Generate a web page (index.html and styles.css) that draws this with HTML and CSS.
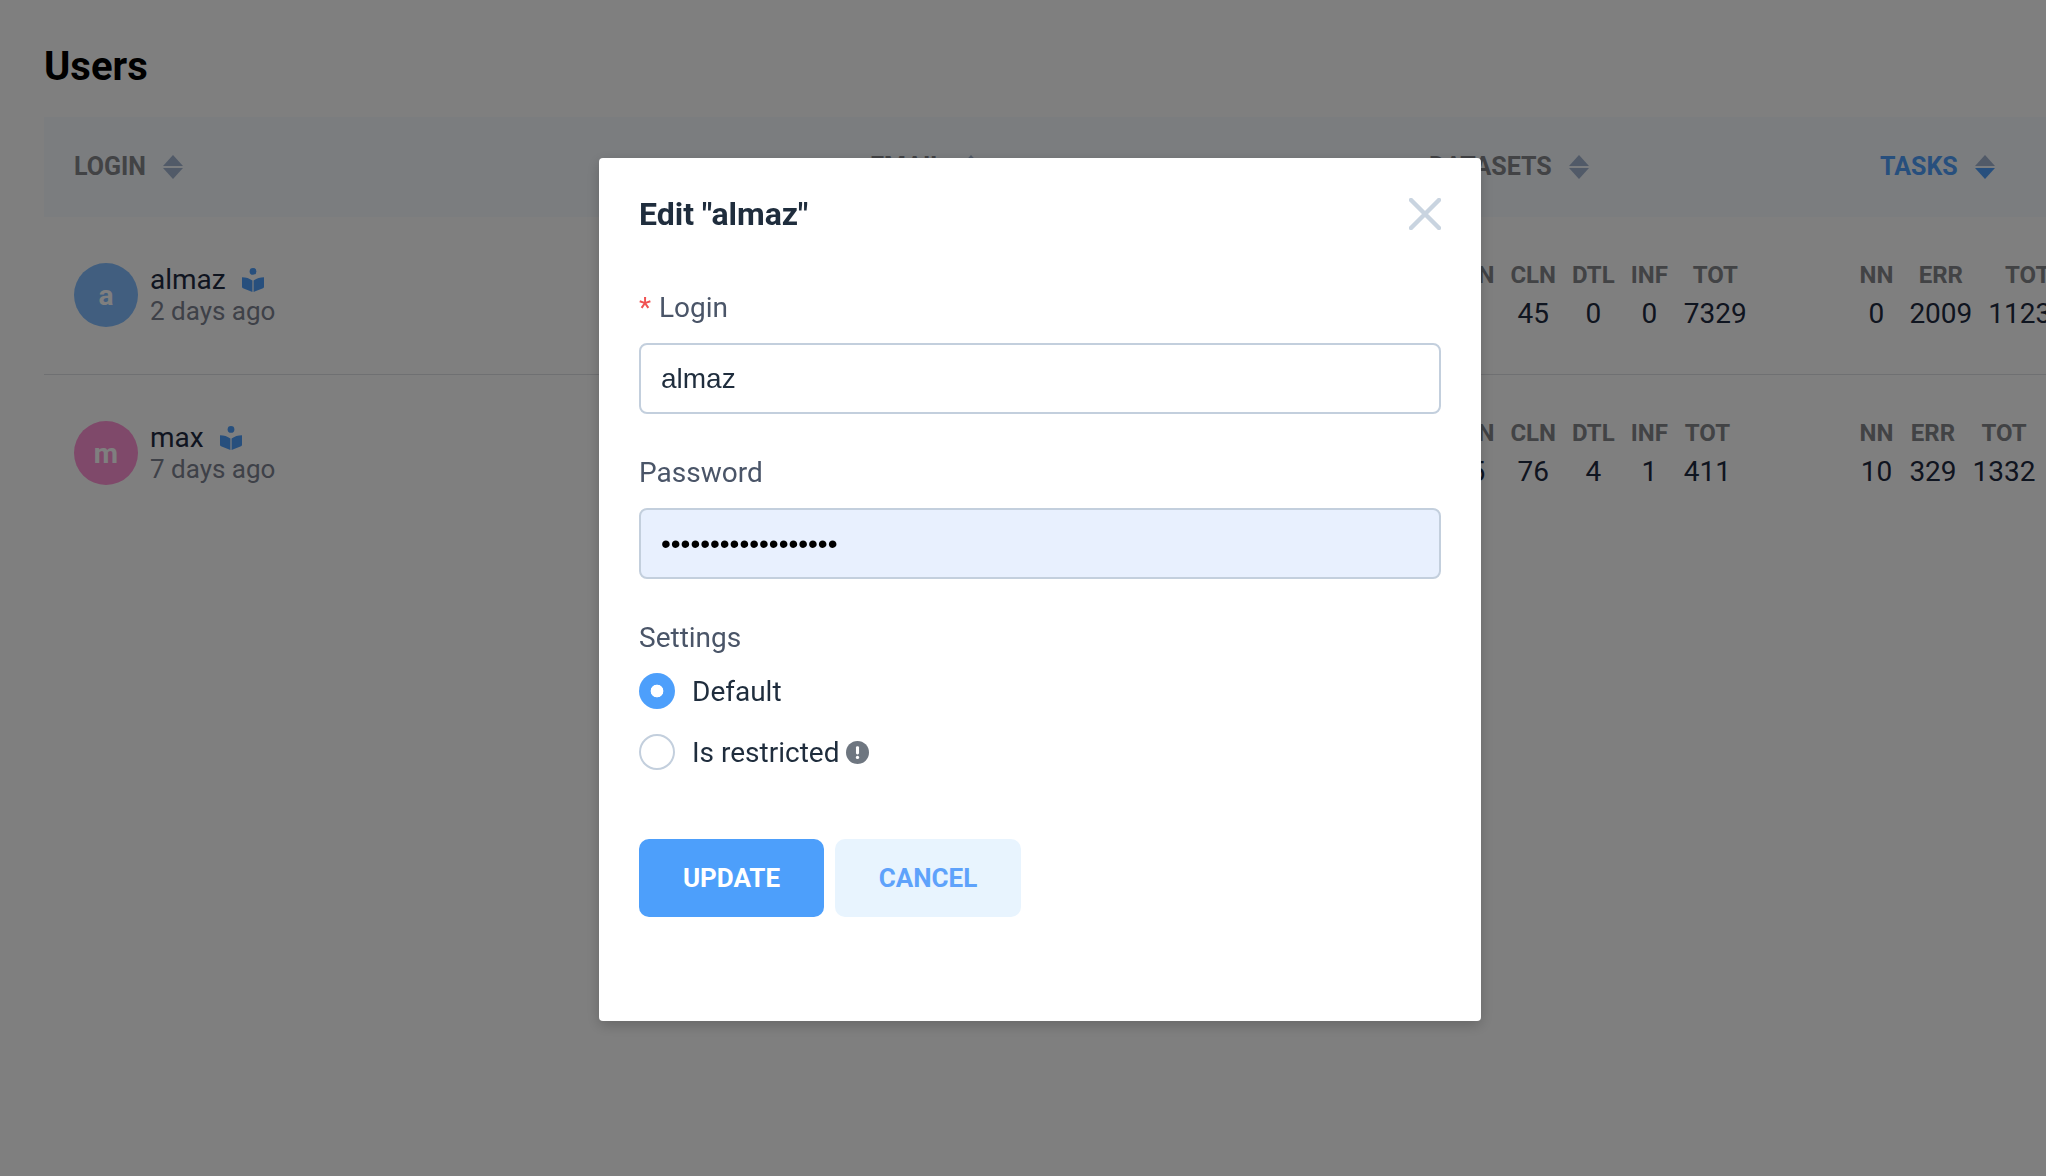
FILE: index.html
```html
<!DOCTYPE html>
<html lang="en">
<head>
    <meta charset="UTF-8">
    <title>Users</title>
    <link rel="stylesheet" href="styles.css">
</head>
<body>
    <div class="page">
        <h1>Users</h1>

        <table class="users">
            <thead>
                <tr>
                    <th class="col-login"><span class="sort">LOGIN <i class="arrows"><b class="up"></b><b class="down"></b></i></span></th>
                    <th class="col-email"><span class="sort">EMAIL <i class="arrows"><b class="up"></b><b class="down"></b></i></span></th>
                    <th class="col-datasets"><span class="sort">DATASETS <i class="arrows"><b class="up"></b><b class="down"></b></i></span></th>
                    <th class="col-tasks"><span class="sort active">TASKS <i class="arrows"><b class="up"></b><b class="down"></b></i></span></th>
                </tr>
            </thead>
            <tbody>
                <tr>
                    <td>
                        <div class="user">
                            <div class="avatar avatar-blue">a</div>
                            <div>
                                <div class="name">almaz
                                    <svg class="reader" viewBox="0 0 22 24"><circle cx="11" cy="3.4" r="3.4"/><path d="M0 9.2c4 0 7.6 1.2 10.4 3.4V24L1 20.2c-.6-.3-1-.8-1-1.5zM22 9.2c-4 0-7.6 1.2-10.4 3.4V24l9.4-3.8c.6-.3 1-.8 1-1.5z"/></svg>
                                </div>
                                <div class="seen">2 days ago</div>
                            </div>
                        </div>
                    </td>
                    <td>almaz@example.com</td>
                    <td class="stats-datasets">
                        <table class="stats">
                            <tr><th>NN</th><th>CLN</th><th>DTL</th><th>INF</th><th>TOT</th></tr>
                            <tr><td>1</td><td>45</td><td>0</td><td>0</td><td>7329</td></tr>
                        </table>
                    </td>
                    <td class="stats-tasks">
                        <table class="stats">
                            <tr><th>NN</th><th>ERR</th><th>TOT</th></tr>
                            <tr><td>0</td><td>2009</td><td>11238</td></tr>
                        </table>
                    </td>
                </tr>
                <tr>
                    <td>
                        <div class="user">
                            <div class="avatar avatar-pink">m</div>
                            <div>
                                <div class="name">max
                                    <svg class="reader" viewBox="0 0 22 24"><circle cx="11" cy="3.4" r="3.4"/><path d="M0 9.2c4 0 7.6 1.2 10.4 3.4V24L1 20.2c-.6-.3-1-.8-1-1.5zM22 9.2c-4 0-7.6 1.2-10.4 3.4V24l9.4-3.8c.6-.3 1-.8 1-1.5z"/></svg>
                                </div>
                                <div class="seen">7 days ago</div>
                            </div>
                        </div>
                    </td>
                    <td>max@example.com</td>
                    <td class="stats-datasets">
                        <table class="stats">
                            <tr><th>NN</th><th>CLN</th><th>DTL</th><th>INF</th><th>TOT</th></tr>
                            <tr><td>5</td><td>76</td><td>4</td><td>1</td><td>411</td></tr>
                        </table>
                    </td>
                    <td class="stats-tasks">
                        <table class="stats">
                            <tr><th>NN</th><th>ERR</th><th>TOT</th></tr>
                            <tr><td>10</td><td>329</td><td>1332</td></tr>
                        </table>
                    </td>
                </tr>
            </tbody>
        </table>
    </div>

    <!-- Edit dialog -->
    <div class="overlay">
        <form class="modal">
            <div class="modal-head">
                <h2>Edit "almaz"</h2>
                <svg class="close" viewBox="0 0 32 32"><path d="M2 2l28 28M30 2L2 30"/></svg>
            </div>

            <label class="field-label" for="login"><span class="required">*</span> Login</label>
            <input class="field" id="login" type="text" value="almaz">

            <label class="field-label gap" for="password">Password</label>
            <input class="field field-filled" id="password" type="password" value="123456789012345678">

            <div class="field-label gap">Settings</div>
            <label class="radio radio-first">
                <input type="radio" name="settings" checked>
                <span>Default</span>
            </label>
            <label class="radio">
                <input type="radio" name="settings">
                <span>Is restricted</span>
                <svg class="info" viewBox="0 0 24 24"><circle cx="12" cy="12" r="12"/><rect x="10.4" y="5.5" width="3.2" height="8.5" rx="1.4" fill="#fff"/><circle cx="12" cy="17.2" r="1.7" fill="#fff"/></svg>
            </label>

            <div class="buttons">
                <button class="btn btn-primary" type="button">UPDATE</button>
                <button class="btn btn-light" type="button">CANCEL</button>
            </div>
        </form>
    </div>
</body>
</html>
```

FILE: styles.css
```css
html, body {
    margin: 0;
    height: 100%;
    overflow: hidden;
}
body {
    font-family: Roboto, "Liberation Sans", sans-serif;
    background: #fff;
    color: #1f2a40;
}
.page {
    padding: 43px 0 0 44px;
}
h1 {
    margin: 0 0 26px;
    font-size: 40px;
    line-height: 48px;
    font-weight: 700;
    color: #000;
}

/* Users table */
.users {
    width: 2400px;
    table-layout: fixed;
    border-collapse: separate;
    border-spacing: 0;
    font-size: 28px;
}
.users > thead th {
    height: 100px;
    padding: 0 0 0 30px;
    background: #f6fafe;
    text-align: left;
}
.col-login { width: 766px; }
.col-email { width: 529px; }
.col-datasets { width: 421px; }
.sort {
    display: flex;
    align-items: center;
    gap: 17px;
    font-size: 25px;
    line-height: 30px;
    font-weight: 700;
    color: #84868b;
}
.sort.active {
    color: #4f9ffb;
}
.arrows {
    display: flex;
    flex-direction: column;
    gap: 2px;
}
.arrows b {
    display: block;
    width: 0;
    height: 0;
    border-left: 10px solid transparent;
    border-right: 10px solid transparent;
}
.arrows .up {
    border-bottom: 11px solid #a2b4d0;
}
.arrows .down {
    border-top: 11px solid #a2b4d0;
}
.active .arrows .down {
    border-top-color: #4f9ffb;
}
.users > tbody > tr > td {
    height: 156px;
    padding: 0 0 1px 30px;
    border-bottom: 1px solid #dfe1e5;
}
.users > tbody > tr:last-child > td {
    border-bottom: 0;
}
.user {
    display: flex;
    align-items: center;
    gap: 12px;
}
.avatar {
    width: 64px;
    height: 64px;
    border-radius: 50%;
    display: flex;
    align-items: center;
    justify-content: center;
    font-size: 28px;
    font-weight: 700;
    color: #fff;
}
.avatar-blue { background: #82bdff; }
.avatar-pink { background: #ff93d4; }
.name {
    display: flex;
    align-items: center;
    gap: 16px;
    padding-top: 1px;
    line-height: 32px;
    color: #1f2a40;
}
.seen {
    margin-top: -1px;
    font-size: 26px;
    line-height: 32px;
    color: #7c8290;
}
.reader {
    width: 22px;
    height: 24px;
    fill: #4f9ffb;
}

.users > tbody > tr > td.stats-datasets {
    padding-left: 53.5px;
}
.users > tbody > tr > td.stats-tasks {
    padding-left: 1.5px;
}
.stats {
    border-collapse: collapse;
}
.stats th, .stats td {
    padding: 0 8px;
    height: 38px;
    line-height: 38px;
    text-align: center;
}
.stats th {
    height: 36px;
    padding-bottom: 2px;
    line-height: 36px;
    font-size: 24px;
    font-weight: 700;
    color: #84868b;
}
.stats td {
    font-size: 28px;
}

/* Dialog */
.overlay {
    position: fixed;
    inset: 0;
    background: rgba(0, 0, 0, 0.5);
}
.modal {
    position: absolute;
    left: 599px;
    top: 158px;
    width: 882px;
    box-sizing: border-box;
    padding: 32px 40px 104px;
    background: #fff;
    border-radius: 4px;
    box-shadow: 0 4px 14px rgba(0, 0, 0, 0.2);
}
.modal-head {
    display: flex;
    justify-content: space-between;
    align-items: center;
    margin-bottom: 50px;
}
h2 {
    margin: 0;
    font-size: 32px;
    line-height: 48px;
    font-weight: 700;
    color: #1f2d3d;
}
.close {
    width: 32px;
    height: 32px;
    fill: none;
    stroke: #c9d4e0;
    stroke-width: 4.5;
    stroke-linecap: round;
}
.field-label {
    display: block;
    margin-bottom: 15px;
    font-size: 28px;
    line-height: 40px;
    color: #4a5568;
}
.gap {
    margin-top: 39px;
}
.required {
    margin-right: 1px;
    color: #f05252;
}
.field {
    display: block;
    box-sizing: border-box;
    width: 100%;
    height: 71px;
    padding: 0 20px;
    border: 2px solid #c3cfdd;
    border-radius: 8px;
    outline: none;
    background: #fff;
    font-family: "Liberation Sans", sans-serif;
    font-size: 28px;
    color: #1f2d3d;
}
.field-filled {
    background: #e8f0fe;
    color: #000;
}
.radio {
    display: flex;
    align-items: center;
    height: 36px;
    font-size: 28px;
    color: #1f2d3d;
}
.radio-first {
    margin-bottom: 25px;
}
.radio input {
    appearance: none;
    box-sizing: border-box;
    width: 36px;
    height: 36px;
    margin: 0 17px 0 0;
    border: 2px solid #c3cfdd;
    border-radius: 50%;
    background: #fff;
}
.radio input:checked {
    border: 0;
    background: radial-gradient(circle, #fff 6px, #4d9ffb 6.7px);
}
.info {
    width: 23px;
    height: 23px;
    margin-left: 7px;
    fill: #6e7680;
}
.buttons {
    display: flex;
    gap: 11px;
    margin-top: 69px;
}
.btn {
    width: 185px;
    height: 78px;
    border: 0;
    border-radius: 10px;
    font-family: Roboto, sans-serif;
    font-size: 26px;
    font-weight: 700;
    cursor: pointer;
}
.btn-primary {
    background: #4d9ffb;
    color: #fff;
}
.btn-light {
    width: 186px;
    background: #e8f4fe;
    color: #5ea2fb;
}
```
